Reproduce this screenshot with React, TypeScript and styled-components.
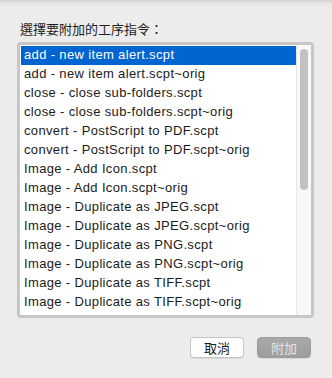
import React from 'react'
import styled, { createGlobalStyle } from 'styled-components'

const items = [
  'add - new item alert.scpt',
  'add - new item alert.scpt~orig',
  'close - close sub-folders.scpt',
  'close - close sub-folders.scpt~orig',
  'convert - PostScript to PDF.scpt',
  'convert - PostScript to PDF.scpt~orig',
  'Image - Add Icon.scpt',
  'Image - Add Icon.scpt~orig',
  'Image - Duplicate as JPEG.scpt',
  'Image - Duplicate as JPEG.scpt~orig',
  'Image - Duplicate as PNG.scpt',
  'Image - Duplicate as PNG.scpt~orig',
  'Image - Duplicate as TIFF.scpt',
  'Image - Duplicate as TIFF.scpt~orig',
]

export default function App() {
  return (
    <>
      <GlobalStyle />
      <Sheet>
        <Label>選擇要附加的工序指令：</Label>
        <ListBox>
          <List>
            {items.map((item, index) => (
              <Row key={index} $selected={index === 0}>{item}</Row>
            ))}
          </List>
          <Track>
            <Thumb />
          </Track>
        </ListBox>
        <Footer>
          <Button>取消</Button>
          <Button $primary>附加</Button>
        </Footer>
      </Sheet>
    </>
  )
}

const GlobalStyle = createGlobalStyle`
    body {
        margin: 0;
        background: #ececec;
    }
`

const Sheet = styled.div`
    width: 332px;
    height: 378px;
    box-sizing: border-box;
    padding: 20px 18px 0 17px;
    background: linear-gradient(#d2d2d2 0px, #e4e4e4 3px, #ececec 6px, #ececec 100%);
    display: flex;
    flex-direction: column;
`

const Label = styled.div`
    font-family: "Noto Sans CJK TC", sans-serif;
    font-size: 13px;
    line-height: 17px;
    height: 17px;
    color: #1e1e1e;
    padding-left: 3px;
`

const ListBox = styled.div`
    margin-top: 5px;
    height: 276px;
    box-sizing: border-box;
    border: 3px solid #c6c6c6;
    border-radius: 4px;
    background: #fff;
    display: flex;
    overflow: hidden;
`

const List = styled.div`
    flex: 1;
    padding: 1px 0 0 1px;
    overflow: hidden;
`

const Row = styled.div<{ $selected?: boolean }>`
    height: 19px;
    line-height: 18px;
    padding-left: 3px;
    font-family: "Liberation Sans", Arial, sans-serif;
    font-size: 13px;
    letter-spacing: 0.35px;
    white-space: nowrap;
    color: ${p => (p.$selected ? '#ffffff' : '#1b1b1b')};
    background: ${p => (p.$selected ? '#0064d1' : 'transparent')};
`

const Track = styled.div`
    width: 15px;
    box-sizing: border-box;
    border-left: 1px solid #e6e6e6;
    background: #f8f8f8;
    padding: 4px 3px 0 3px;
`

const Thumb = styled.div`
    width: 8px;
    height: 141px;
    border-radius: 4px;
    background: #c2c2c2;
`

const Footer = styled.div`
    margin-top: 19px;
    display: flex;
    justify-content: flex-end;
    gap: 13px;
    padding-right: 3px;
`

const Button = styled.div<{ $primary?: boolean }>`
    width: 54px;
    height: 21px;
    box-sizing: border-box;
    border-radius: 4px;
    font-family: "Noto Sans CJK TC", sans-serif;
    font-size: 13px;
    line-height: 19px;
    text-align: center;
    border: 1px solid ${p => (p.$primary ? '#9c9c9c' : '#c4c4c4')};
    background: ${p => (p.$primary ? 'linear-gradient(#a9a9a9, #9d9d9d)' : '#ffffff')};
    color: ${p => (p.$primary ? '#e4e4e4' : '#1b1b1b')};
    box-shadow: 0 1px 0 rgba(0, 0, 0, 0.08);
`
